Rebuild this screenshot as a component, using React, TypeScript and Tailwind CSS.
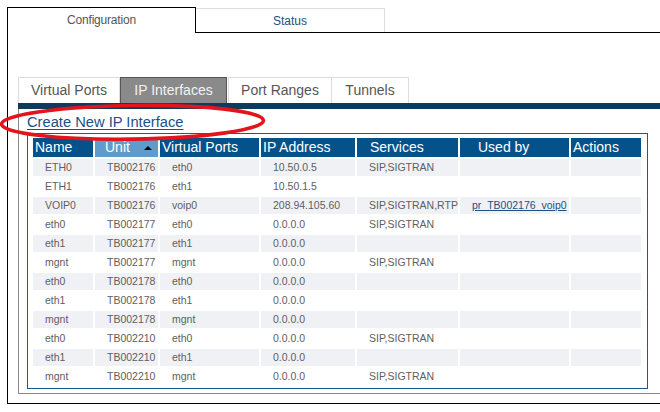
import React from "react";

const rows: string[][] = [
  ["ETH0", "TB002176", "eth0", "10.50.0.5", "SIP,SIGTRAN", ""],
  ["ETH1", "TB002176", "eth1", "10.50.1.5", "", ""],
  ["VOIP0", "TB002176", "voip0", "208.94.105.60", "SIP,SIGTRAN,RTP", "pr_TB002176_voip0"],
  ["eth0", "TB002177", "eth0", "0.0.0.0", "SIP,SIGTRAN", ""],
  ["eth1", "TB002177", "eth1", "0.0.0.0", "", ""],
  ["mgnt", "TB002177", "mgnt", "0.0.0.0", "SIP,SIGTRAN", ""],
  ["eth0", "TB002178", "eth0", "0.0.0.0", "", ""],
  ["eth1", "TB002178", "eth1", "0.0.0.0", "", ""],
  ["mgnt", "TB002178", "mgnt", "0.0.0.0", "", ""],
  ["eth0", "TB002210", "eth0", "0.0.0.0", "SIP,SIGTRAN", ""],
  ["eth1", "TB002210", "eth1", "0.0.0.0", "", ""],
  ["mgnt", "TB002210", "mgnt", "0.0.0.0", "SIP,SIGTRAN", ""],
];

export default function App() {
  return (
    <div className="relative w-[660px] h-[412px] overflow-hidden bg-white font-['Liberation_Sans',Arial,sans-serif]">
      <div className="ml-[7px] mt-[7px] w-[653px] h-[397px] border-l border-b border-black flex flex-col">
        {/* top tabs */}
        <div className="flex h-[26px]">
          <div className="w-[188px] h-[26px] border-t border-r border-black flex items-center justify-center text-[12px] tracking-[-0.2px] text-[#555] pb-[2px]">
            Configuration
          </div>
          <div className="flex-1 h-[26px] border-b border-black flex">
            <div className="w-[189px] mt-[1px] border-t border-r border-[#dcdcdc] flex items-center justify-center text-[12px] text-[#1d4f7c] pt-[1px]">
              Status
            </div>
          </div>
        </div>

        {/* inner panel */}
        <div className="ml-[10px] mt-[44px] flex flex-col">
          <div className="flex h-[26px] text-[14px]">
            <div className="w-[102px] border-t border-l border-r border-[#dcdcdc] flex items-center justify-center text-[#555]">
              Virtual Ports
            </div>
            <div className="w-[107px] border-t border-l border-r border-[#555] bg-[#8a8a8a] flex items-center justify-center text-[#f2f2f2]">
              IP Interfaces
            </div>
            <div className="w-[104px] ml-[1px] border-t border-l border-r border-[#dcdcdc] flex items-center justify-center text-[#555]">
              Port Ranges
            </div>
            <div className="w-[77px] border-t border-r border-[#dcdcdc] flex items-center justify-center text-[#555]">
              Tunnels
            </div>
          </div>
          <div className="h-[6px] bg-[#0e3a5b]" />
          <div className="border-l border-b border-[#8a8a8a] pl-[8px] pb-[4px]">
            <div className="h-[24px] pt-[3px] leading-[20px] text-[14.7px]">
              <span className="text-[#1d4f86] underline underline-offset-[2px]">Create New IP Interface</span>
            </div>
            <div className="w-[621px] border border-[#1a5a8e] pl-[5px] pr-[6px] pt-[4px] pb-[3px]">
              <div className="grid grid-cols-[60px_63px_99px_94px_101px_109px_70px] grid-rows-[19px] auto-rows-[17px] gap-[2px]">
                <div className="bg-[#05528a] text-white text-[14px] leading-[19px] pl-[2px]">Name</div>
                <div className="bg-[#5f9bcb] text-white text-[14px] leading-[19px] pl-[10px] pr-[6px] flex items-center justify-between">
                  <span>Unit</span>
                  <span className="w-0 h-0 border-l-[4px] border-r-[4px] border-b-[4px] border-l-transparent border-r-transparent border-b-black" />
                </div>
                <div className="bg-[#05528a] text-white text-[14px] leading-[19px] pl-[2px] whitespace-nowrap">Virtual Ports</div>
                <div className="bg-[#05528a] text-white text-[14px] leading-[19px] pl-[2px] whitespace-nowrap">IP Address</div>
                <div className="bg-[#05528a] text-white text-[14px] leading-[19px] pl-[13px]">Services</div>
                <div className="bg-[#05528a] text-white text-[14px] leading-[19px] pl-[18px]">Used by</div>
                <div className="bg-[#05528a] text-white text-[14px] leading-[19px] pl-[2px]">Actions</div>
                {rows.map((r, i) => {
                  const bg = i % 2 === 0 ? "bg-[#f0f1f5]" : "bg-white";
                  return (
                    <React.Fragment key={i}>
                      {r.map((c, j) => (
                        <div
                          key={j}
                          className={`${bg} text-[10.5px] leading-[17px] pl-[12px] text-[#5e5e5e] whitespace-nowrap overflow-hidden`}
                        >
                          {j === 5 && c ? (
                            <span className="text-[#1d4f86] underline">{c}</span>
                          ) : (
                            c
                          )}
                        </div>
                      ))}
                      <div className={bg} />
                    </React.Fragment>
                  );
                })}
              </div>
            </div>
          </div>
        </div>
      </div>

      {/* red annotation ellipse */}
      <svg
        className="absolute left-0 top-0 pointer-events-none"
        width="660"
        height="412"
        viewBox="0 0 660 412"
      >
        <ellipse
          cx="132.5"
          cy="122.3"
          rx="131"
          ry="16.8"
          fill="none"
          stroke="#e3141b"
          strokeWidth="3.6"
          transform="rotate(-0.8 132.5 122.3)"
        />
      </svg>
    </div>
  );
}
